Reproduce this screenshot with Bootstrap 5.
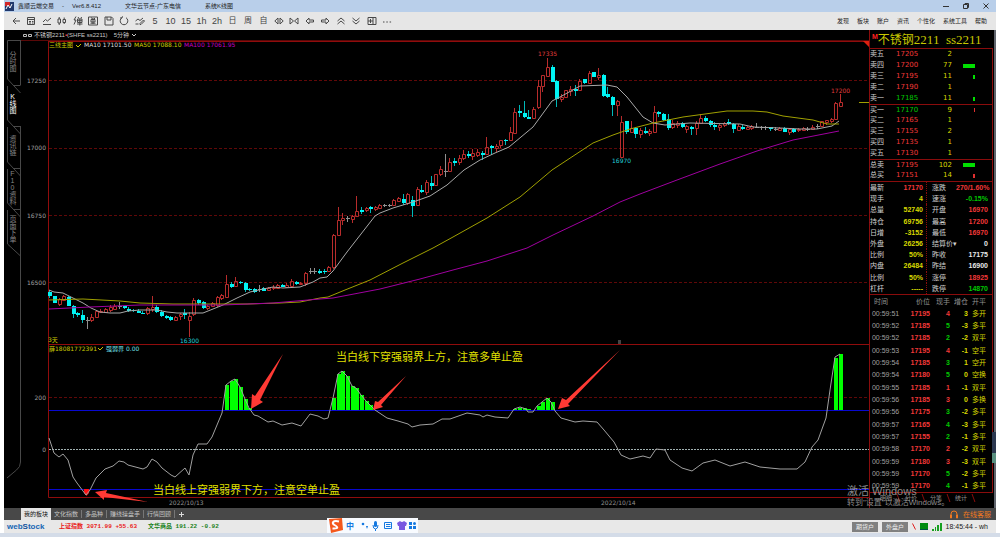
<!DOCTYPE html>
<html lang="zh-CN">
<head>
<meta charset="utf-8">
<meta name="viewport" content="width=device-width, initial-scale=1">
<title>鑫顺云端交易</title>
<link rel="stylesheet" href="https://cdn.jsdelivr.net/npm/bootstrap@5.3.0/dist/css/bootstrap.min.css">
<style>
:root{--line:#8a0c0c;--up:#f03838;--down:#00c800;--gold:#c8c800}
body{background:#fff;font-family:"Liberation Sans","Noto Sans CJK SC",sans-serif;font-size:7px;line-height:1;min-height:100vh;padding:0 4px;overflow-x:hidden}
button{background:none;border:0;padding:0;color:inherit;line-height:1}
svg{display:block}
.title-bar{height:12px;background:#b9cfea;color:#222;font-size:6px;padding-left:1px}
.win-btns button{width:20px;height:12px;display:grid;place-items:center}
.tool-bar{height:18px;background:#e6e6e6;color:#444;padding-left:4px}
.tools{display:grid;grid-template-columns:repeat(25,1fr);width:387px}
.tools button{display:grid;place-items:center;font-size:9px;height:18px}
.tools .cjk{font-size:8px}
.tools svg{width:10px;height:10px;fill:none;stroke:#484848;stroke-width:1}
.menus a{color:#222;text-decoration:none;font-size:6px}
.menus{gap:8px;padding-right:9px}
.desk{background:#000;color:#c0c0c0}
.rail{width:17px;padding-top:10px}
.rail button{writing-mode:vertical-rl;text-orientation:upright;height:42px;width:17px;display:flex;align-items:center;justify-content:center;color:#858585;font-size:7px;position:relative}
.rail button.on{color:#fff}
.rail svg{position:absolute;left:0;top:0}
.code-row{height:11px;font-size:6px;padding-left:2px;gap:2px;border-bottom:1px solid #5a0808;color:#c8c8c8}
.quote-panel{width:127px;border-left:1px solid var(--line);border-right:2px solid #60646c;flex:none;padding-right:1px}
.name-row{height:18px;color:var(--gold);font-family:"Liberation Serif","Noto Sans CJK SC",serif;font-size:12px;white-space:pre;padding-left:2px}
.name-row .latin{font-size:13px}
.name-row sup{color:#ff2020;font:bold 7px "Liberation Sans",sans-serif;top:-3px}
.quote-panel table{width:100%;border-collapse:separate;border-spacing:0;table-layout:fixed;line-height:1;white-space:nowrap}
.quote-panel td,.quote-panel th{padding:0;font-weight:400;vertical-align:middle;overflow:visible}
.quote-panel th{color:#d0d0d0}
.book{border-top:1px solid var(--line);border-right:1px solid var(--line);font-family:"DejaVu Sans","Noto Sans CJK SC",sans-serif}
.book tr{height:11px}
.book .sep td,.book .sep th{border-top:1px solid var(--line)}
.vol-bar{height:4px;display:block;margin-left:auto;margin-right:17px}
.stats{height:114px;border:1px solid var(--line);border-left:0}
.stats .num,.ticks .num{font-weight:700;text-align:right}
.stats .mid{border-right:1px dotted var(--line)}
.ticks{border-right:1px solid var(--line);border-bottom:1px solid var(--line)}
.ticks thead tr{height:12px}
.ticks thead th{color:#909090}
.r{color:var(--up)}.g{color:var(--down)}.y{color:#d8d800}.w{color:#e8e8e8}
.page-tabs{font-size:6px;height:10px;padding-left:4px;color:#909090}
.page-tabs button{padding:1px 6px;white-space:nowrap;border-right:1px solid var(--line);transform:skewX(20deg)}
.page-tabs span{display:block;transform:skewX(-20deg)}
.water{position:absolute;right:50px;bottom:1px;width:99px;color:#b8b8b8;opacity:.75;font-size:11px;white-space:nowrap;pointer-events:none}
.water small{font-size:8px;display:block;margin-top:2px}
.side-knob{position:absolute;right:0;top:402px;width:4px;height:31px;background:#2c3850;border-bottom:10px solid #5a9080}
.board-bar{height:12px;background:#484848;color:#c4c4c4;font-size:6px;padding:0 5px 0 17px}
.board-bar .boards button{padding:0 3px;border-right:1px solid #777;height:8px}
.board-bar .boards button.on{background:#e4e4e4;color:#111;height:12px;border:0}
.service{color:#f07820;font-size:7px;text-decoration:none}
.status-bar{height:13px;background:#e8e8e8;color:#222;padding-left:3px;position:relative;font-family:"Liberation Mono","Noto Sans CJK SC",monospace;font-size:6px;font-weight:700}
.brand-mark{font:bold 8px "Liberation Sans",sans-serif;color:#1766b4;width:52px}
.fund{margin-left:11px}
.acct{background:#808080;color:#eee;width:26px;height:10px;font-size:6px}
.ime{position:absolute;left:323px;top:-2px;height:15px;width:91px;background:#f8fbff}
.edge{height:4px;background:#d4dce8;margin:0 -4px}
text{font-family:"DejaVu Sans","Noto Sans CJK SC",sans-serif;font-size:6px}
.note{font-size:11px;fill:#e0e000}
.ax{fill:#a0a0a0;text-anchor:end}
</style>
</head>
<body>
<header class="title-bar d-flex align-items-center">
  <svg width="9" height="9" viewBox="0 0 9 9"><rect width="9" height="9" fill="#20386c"/><path d="M0 0h5v4H0z" fill="#d02828"/><path d="M1 7l2-4 2 3 2-4" stroke="#fff" fill="none"/></svg>
  <span class="d-flex gap-2 ps-1"><span>鑫顺云端交易</span><span>-</span><span>Ver6.8.412</span></span>
  <span class="ms-4">文华云节点-广东电信</span><span class="ms-4">系统K线图</span>
  <div class="win-btns d-flex ms-auto">
    <button aria-label="最小化"><svg width="6" height="6"><path d="M0 3.500h6" stroke="#333"/></svg></button>
    <button aria-label="还原"><svg width="6" height="6" fill="none" stroke="#333"><path d="M.5 1.500h4v4h-4zM2 1.500v-1h3.500v4h-1"/></svg></button>
    <button aria-label="关闭"><svg width="6" height="6"><path d="M.5.5l5 5m0-5l-5 5" stroke="#333"/></svg></button>
  </div>
</header>

<nav class="tool-bar d-flex align-items-center justify-content-between">
  <div class="tools">
    <button aria-label="返回"><svg viewBox="0 0 10 10"><path d="M9 5H2M5 2L2 5l3 3"/></svg></button>
    <button aria-label="报价"><svg viewBox="0 0 10 10"><path d="M1.500 1.500h7v7h-7zM1.500 3.500h7M3 5.500h2M6 5.500h1.500M3 7h2M6 7h1.500"/></svg></button>
    <button aria-label="分时"><svg viewBox="0 0 10 10"><path d="M1 6l2.500-2.500 2 1.500L9 2M1 8.500h8"/></svg></button>
    <button aria-label="K线"><svg viewBox="0 0 10 10"><path d="M1 3h2.500v4H1zM2.200 1v2M2.200 7v2M6 3.500h2.500v3H6zM7.200 1.500v2M7.200 6.500V8"/></svg></button>
    <button aria-label="闪电下单"><svg viewBox="0 0 10 10"><path d="M3 .5L1 4h2L1 8.500M4.500 3h4.500v3.500H4.500zM4.500 4.700H9M6.800 3v6.500M4 8h5.500M5 1l1 1.500M8.500 1L8 2.500"/></svg></button>
    <button aria-label="云单"><svg viewBox="0 0 10 10"><path d="M.5 1h9v8h-9zM3 3.500h4v2.500H3zM5 2v6M2.500 7.200h5M3.500 1.500l1 2M7 2L6 3"/></svg></button>
    <button aria-label="保存"><svg viewBox="0 0 10 10"><path d="M1 1h6.500L9 2.500V9H1zM3 1v3h4V1"/></svg></button>
    <button aria-label="刷新"><svg viewBox="0 0 10 10"><path d="M3 1.700a3.800 3.800 0 1 0 4 0M3.500.3L3 2l-2 0"/></svg></button>
    <button aria-label="画线"><svg viewBox="0 0 10 10"><path d="M.5 5L3 3l2 1.500L8 2M.5 8h3M5 7.500L8.500 4l1 1L6 8.500H5z"/></svg></button>
    <button>5</button><button>10</button><button>15</button><button>1h</button><button>2h</button>
    <button class="cjk">日</button><button class="cjk">周</button><button class="cjk">自</button>
    <button aria-label="缩小"><svg viewBox="0 0 10 10"><path d="M4 2L.8 5 4 8zM6 2l3.200 3L6 8z"/></svg></button>
    <button aria-label="放大"><svg viewBox="0 0 10 10"><path d="M1 2l3.500 3L1 8zM9 2L5.500 5 9 8z"/></svg></button>
    <button aria-label="左移"><svg viewBox="0 0 10 10"><path d="M1 5l3-3v2h4.500v2H4v2z"/></svg></button>
    <button aria-label="右移"><svg viewBox="0 0 10 10"><path d="M9 5L6 2v2H1.500v2H6v2z"/></svg></button>
    <button aria-label="上页"><svg viewBox="0 0 10 10"><path d="M1.500 5L5 2l3.500 3M1.500 8L5 5l3.500 3"/></svg></button>
    <button aria-label="下页"><svg viewBox="0 0 10 10"><path d="M1.500 2L5 5l3.500-3M1.500 5L5 8l3.500-3"/></svg></button>
    <button aria-label="布局"><svg viewBox="0 0 10 10"><path d="M1 1.500h8v7H1zM6 1.500v7M1 5h5M3.500 3v4"/></svg></button>
    <button aria-label="更多"><svg viewBox="0 0 10 10"><path d="M1 6h1.500M4.300 6h1.500M7.600 6h1.500"/></svg></button>
  </div>
  <div class="menus d-flex">
    <a href="#">发现</a><a href="#">板块</a><a href="#">账户</a><a href="#">资讯</a><a href="#">个性化</a><a href="#">系统工具</a><a href="#">帮助</a>
  </div>
</nav>

<main class="desk d-flex position-relative">
  <aside class="rail flex-shrink-0 position-relative">
    <svg width="17" height="460" fill="none" stroke="#484848"><path d="M16.500 10.500h-13V49l13 14M9 55.500h7.500M3.500 56v34l13 14M9 96.500h7.500M3.500 97v35l13 14M9 138.500h7.500M3.500 139v34l13 14M9 179.500h7.500M3.500 180v34l13 12M16.500 10v45M16.500 96v336q0 5-4 8L3 448"/></svg>
    <button>分时图</button><button class="on">K线图</button><button>资讯链</button><button>F10资料</button><button>页面下单</button>
  </aside>

  <section class="flex-grow-1" style="min-width:0">
    <div class="code-row d-flex align-items-center">
      <svg width="9" height="5" fill="none" stroke="#bbb"><path d="M.5 1.500h3v2h-3zM5.500 1.500h3v2h-3z"/></svg>
      <span>不锈钢2211<span class="r">▪</span>(SHFE ss2211)</span><span class="ms-1">5分钟</span>
      <svg width="6" height="5" fill="none" stroke="#ccc"><path d="M1 1l2 2 2-2"/></svg>
    </div>
    <svg id="chart" viewBox="21 41 848 467" width="100%">
      <g fill="none">
        <path d="M48.500 41v456.500H869M48 344.500h821M48.500 41.500H869" stroke="#900c0c"/>
        <path d="M49 80.500h820M49 148.500h820M49 215.500h820M49 282.500h820M49 397.500h820" stroke="#600808" stroke-dasharray="3 2"/>
      </g>
      <path d="M863 41h6v6z" fill="#e02010"/>
      <path d="M859 102.500h10" stroke="#a0a000"/>
      <path d="M49 449.500h820" stroke="#a0b0b0" stroke-dasharray="2 1"/>
      <path d="M618 340h3v4h-3z" fill="#444"/>
      <g id="bars" fill="#00ff00"></g>
      <g stroke="#0808d0"><path d="M49 410.500h820M49 489.500h820"/></g>
      <path d="M84 489h5v4l-2.500 3-2.500-3z" fill="#ff1010"/>
      <g id="candles"></g>
      <g id="lines" fill="none"></g>
      <g fill="#ff3a34">
        <path d="M283 354l-28 42-3-2-1 15 12-7-3-2z"/>
        <path d="M406 376l-28 26-3-1-2 9 10-3-2-2z"/>
        <path d="M620 350l-54 50-4-2-4 11 12-3-2-2z"/>
        <path d="M95 492l12-2-1 3 42 9-44-5v3z"/>
      </g>
      <text class="ax" x="46" y="83">17250</text><text class="ax" x="46" y="150">17000</text><text class="ax" x="46" y="218">16750</text><text class="ax" x="46" y="285">16500</text><text class="ax" x="46" y="400">200</text><text class="ax" x="46" y="452">0</text>
      <text x="49" y="47" fill="#c8c800">三线主图</text>
      <text x="84" y="47" fill="#ddd">MA10 17101.50</text><text x="134" y="47" fill="#d0d000">MA50 17088.10</text><text x="184" y="47" fill="#c000c0">MA100 17061.95</text>
      <path d="M76 45l2 2 3-3M98 348l2 2 3-3" fill="none" stroke="#c8c800"/>
      <text x="48" y="342" fill="#c8c800">3天</text>
      <text x="49" y="351" fill="#c8c800">薛18081772391</text><text x="106" y="351" fill="#70e0e8">强弱界 0.00</text>
      <text x="538" y="56" fill="#e03c3c">17335</text><text x="831" y="93" fill="#e03c3c">17200</text>
      <text x="612" y="163" fill="#20d0d8">16970</text><text x="180" y="343" fill="#20d0d8">16300</text>
      <text class="note" x="336" y="361">当白线下穿强弱界上方，注意多单止盈</text>
      <text class="note" x="153" y="494">当白线上穿强弱界下方，注意空单止盈</text>
      <text x="169" y="505" fill="#909090">2022/10/13</text><text x="601" y="505" fill="#909090">2022/10/14</text>
    </svg>
  </section>

  <aside class="quote-panel">
    <div class="name-row d-flex align-items-center"><sup>M</sup><span>不锈钢<span class="latin">2211  ss2211</span></span></div>
    <table class="book"><colgroup><col style="width:26px"><col style="width:26px"><col style="width:30px"><col></colgroup><tbody id="book"></tbody></table>
    <table class="stats"><colgroup><col style="width:22px"><col style="width:31px"><col style="width:4px"><col style="width:5px"><col style="width:24px"><col></colgroup><tbody id="stats"></tbody></table>
    <table class="ticks"><colgroup><col style="width:32px"><col style="width:28px"><col style="width:20px"><col style="width:18px"><col></colgroup>
      <thead><tr><th class="ps-1">时间</th><th class="text-end">价位</th><th class="text-end">现手</th><th class="text-end">增仓</th><th class="ps-1">开平</th></tr></thead><tbody id="ticks"></tbody></table>
    <div class="page-tabs d-flex align-items-center"><button><span>明细</span></button><button><span>分价</span></button><button><span>分笔</span></button><button><span>统计</span></button></div>
  </aside>
  <div class="water">激活 Windows<small>转到"设置"以激活Windows。</small></div>
  <div class="side-knob"></div>
</main>

<div class="board-bar d-flex align-items-center justify-content-between">
  <div class="boards d-flex align-items-center"><button class="on">我的板块</button><button>文化指数</button><button>多品种</button><button>赚线操盘手</button><button>行情回顾</button>
  <button class="border-0" aria-label="添加"><svg width="6" height="6" stroke="#ddd"><path d="M3.500 1v5M1 3.500h5"/></svg></button></div>
  <a class="service d-flex align-items-center gap-1" href="#"><svg width="10" height="9" fill="none" stroke="#f07820"><path d="M2 5V4a3 3 0 0 1 6 0v1M1.500 5h1v3h-1zM7.500 5h1v3h-1z"/></svg>在线客服</a>
</div>

<footer class="status-bar d-flex align-items-center">
  <span class="brand-mark">web<span style="color:#10509c">S</span>tock</span>
  <span class="text-nowrap" style="color:#e81818">上证指数 3071.99 +55.63</span>
  <span class="fund text-nowrap" style="color:#188018">文华商品 191.22 -0.92</span>
  <div class="d-flex align-items-center ms-auto gap-1 pe-2" style="font-family:'Liberation Sans';font-weight:400;font-size:7px">
    <button class="acct">期货户</button><button class="acct">外盘户</button>
    <svg width="4" height="7"><path d="M.5.5l3 6" stroke="#e02020"/></svg>
    <svg width="8" height="8"><path d="M0 0h8v6H0z" fill="#008c10"/><path d="M0 6.500h8" stroke="#054"/></svg>
    <svg width="10" height="8" fill="#18a020"><path d="M0 6h2v2H0zM3 4h1v4H3zM5 2h2v6H5zM8 0h2v8H8z"/></svg>
    <span class="text-nowrap">18:45:44 - wh</span>
  </div>
  <div class="ime">
    <svg width="91" height="15" viewBox="0 0 91 15">
      <path d="M2 1l13-1 1 12-12 3z" fill="#f4581c"/><path d="M12 3.500C6 2 4 5 7.500 7S12 11 5.500 10.500" fill="none" stroke="#fff" stroke-width="2"/>
      <g fill="#1478e0"><circle cx="36" cy="6" r="1.300"/><path d="M39 8h2l-1 3z"/><rect x="47" y="3" width="3" height="6" rx="1.500"/><path d="M70 5l3-2q2 2 4 0l3 2-1 3h-1v4h-6V8h-1z" fill="#7858e0"/><path d="M82 4h3v3h-3zM82 8h3v3h-3zM86 8h3v3h-3z"/><circle cx="87.500" cy="5.500" r="1.500"/></g>
      <g fill="none" stroke="#1478e0"><path d="M46 7q0 4 2.500 4T51 7M48.500 11v2M57.500 4.500h7v6h-7zM59 6.500h4.500M59 8.500h4.500"/></g>
      <text x="19" y="11" fill="#1478e0" style="font-size:8px;font-weight:700">中</text>
    </svg>
  </div>
</footer>
<div class="edge"></div>

<script>
// candle rows: kind (r rising, c falling, w doji), high, top, bottom, low
const K = `c290,292,296,298|c296,296,303,303|r298,299,304,306|r295,296,300,301|c296,297,306,306|c305,306,314,318|c312,313,315,317|c310,315,320,323|w317,320,320,329|r314,317,320,322|r310,311,317,317|r309,311,312,313|r308,309,312,313|r305,307,310,312|r304,306,309,310|w302,306,306,309|c306,306,308,309|c307,309,311,312|c309,310,311,312|c309,311,313,313|c311,313,314,314|r307,308,313,315|r296,307,309,312|c305,307,312,313|c310,312,316,317|c315,316,318,319|c316,317,320,321|r316,317,320,321|r313,314,316,320|c309,313,315,319|r312,316,320,337|r298,300,314,316|c299,300,303,305|c301,302,308,309|r305,306,308,310|r302,303,306,307|r296,297,305,307|r294,295,298,300|r275,284,297,297|c282,284,287,288|r277,281,286,286|c281,282,283,284|c282,283,290,292|c288,289,290,291|c288,289,292,293|w285,289,289,292|c287,288,291,291|r287,288,290,291|r285,287,288,290|r284,285,288,289|c284,285,287,287|r283,285,287,288|r279,281,286,286|c281,282,284,285|r282,283,284,285|r272,273,283,286|w268,271,271,274|w268,271,271,274|c269,271,273,274|c269,271,272,274|r266,267,271,272|r234,235,267,269|r207,220,235,235|r213,218,220,225|w216,218,218,222|r215,216,219,223|r196,211,216,216|c207,210,212,214|r207,208,210,212|c206,207,209,213|r206,207,209,211|r204,205,208,209|w204,205,205,207|w204,205,205,207|r199,200,205,206|r197,198,201,202|c194,199,203,205|r193,194,203,205|c196,200,206,217|r187,189,205,206|c185,190,192,193|r180,182,192,195|c176,183,186,190|r174,174,185,186|r166,169,174,176|w154,171,171,177|r158,162,171,172|c158,161,163,166|r155,158,162,165|r150,154,158,160|c151,154,156,158|r149,153,156,160|r149,152,155,157|c151,153,155,160|r137,147,154,155|c145,146,148,155|r144,146,148,152|r140,140,145,148|c139,140,141,145|r127,132,140,141|r108,112,133,133|c105,111,113,117|c101,113,117,118|c110,117,119,119|r107,109,118,119|r80,86,107,109|r75,75,86,92|r58,67,76,77|c65,67,82,82|c80,81,99,107|r94,97,99,102|r90,90,97,97|r86,89,91,96|c85,89,91,96|r79,81,90,90|c79,79,83,84|r71,73,83,83|c72,72,77,77|r68,75,77,80|c74,75,96,97|c87,94,97,98|c96,97,105,116|r100,101,105,116|r116,122,157,157|c121,121,132,134|r121,128,132,133|c127,128,134,138|r128,130,134,138|c127,131,133,134|r129,131,133,136|r106,112,132,132|c111,112,114,117|c113,114,120,121|c114,119,128,130|r120,123,127,129|r121,123,125,128|c122,123,127,128|r125,126,129,133|c126,127,129,135|r121,123,128,135|r114,118,123,124|c116,118,121,122|c120,121,125,127|c122,125,127,130|r124,125,127,131|r122,123,125,127|c119,122,124,125|c123,124,129,133|r124,126,130,131|c125,127,129,130|r126,127,129,130|r125,126,128,130|w123,127,127,128|w126,127,127,130|w126,127,127,130|c127,127,129,131|w127,129,129,131|r127,128,130,131|c127,128,132,132|r128,129,132,135|c128,129,132,133|r128,129,130,132|r127,128,130,131|w127,129,129,131|r125,127,129,129|w124,126,126,129|r121,121,126,126|r120,120,122,125|r118,119,121,123|r102,103,119,120|r94,102,106,107`.split('|');
const X = i => Math.round(49.3 + 4.65 * i);
let s = '';
K.forEach((d, i) => {
  const [h, t, b, l] = d.slice(1).split(',').map(Number), x = X(i);
  if (d[0] === 'c') s += `<path d="M${x + .5} ${h}V${l}" stroke="#00b8b8"/><rect x="${x - 1}" y="${t}" width="4" height="${Math.max(b - t, 1)}" fill="#00f4f4"/>`;
  else if (d[0] === 'w') s += `<path d="M${x + .5} ${h}V${l}M${x - 1} ${t + .5}h4" stroke="#909090"/>`;
  else s += `<path d="M${x + .5} ${h}V${t}M${x + .5} ${b}V${l}M${x - 1 + .5} ${t + .5}h3V${Math.max(b, t + 1) + .5}h-3z" stroke="#b82c2c" fill="none"/>`;
});
document.getElementById('candles').innerHTML = s;

const bars = {38:385,39:381,40:379,41:387,42:399,43:408,61:398,62:374,63:371,64:376,65:386,66:388,67:395,68:401,69:405,100:409,101:408,102:408,103:409,105:406,106:402,107:398,108:402,169:358,170:354};
document.getElementById('bars').innerHTML = Object.entries(bars).map(([i, y]) => `<rect x="${X(i) - 1}" y="${y}" width="4" height="${411 - y}"/>`).join('');

const L = [
 ['#a8a8a8','49,290 54,292 63,293 73,298 83,303 91,308 100,312 110,313 120,313 128,311 140,310 157,310 167,312 177,313 203,313 213,309 223,305 237,298 250,292 263,289 273,287 283,288 300,287 313,282 320,278 327,277 333,271 347,252 375,216 380,213 393,208 413,202 430,196 447,185 464,170 480,160 495,153 509,147 515,142 533,127 552,101 560,97 580,86 607,85 617,87 627,97 643,117 653,123 665,125 690,123 740,124 753,127 780,128 800,129 817,129 832,126 839,121'],
 ['#a0a000','49,300 83,299 120,301 140,303 173,304 247,304 280,303 300,302 320,298 328,297 345,290 370,280 403,263 433,248 453,237 487,218 520,197 552,170 593,143 613,135 630,129 653,123 683,117 727,111 753,111 767,112 783,116 813,120 827,124 839,124'],
 ['#a000a0','49,309 90,307 140,305 223,305 273,303 320,299 333,298 380,289 420,279 453,270 487,261 527,248 553,235 593,216 620,202 640,194 677,180 720,164 757,151 793,140 839,131'],
 ['#a0a0a0','49,438 54,453 59,457 63,454 68,460 73,477 77,483 86,495 90,490 96,478 105,469 113,466 119,461 124,462 128,465 143,469 147,467 152,459 157,462 162,468 171,475 175,477 185,468 189,475 193,455 198,444 207,444 212,437 222,413 226,385 231,381 235,379 240,387 245,399 249,408 254,415 258,416 268,422 273,421 282,425 292,423 301,426 310,414 318,416 324,419 328,418 333,398 338,374 342,371 347,376 352,386 356,388 361,395 366,401 370,405 375,410 387,418 398,421 408,424 412,427 420,425 433,424 442,419 450,419 467,413 480,415 483,417 487,415 495,417 508,418 514,409 520,407 526,409 528,412 533,412 537,406 547,398 551,402 555,411 561,418 575,422 583,421 597,422 604,430 614,442 621,455 630,459 643,456 650,458 656,449 665,450 670,460 682,468 692,471 703,463 715,460 730,466 745,462 760,467 780,469 797,469 805,462 812,447 818,440 826,418 830,390 835,357 840,354']];
document.getElementById('lines').innerHTML = L.map(([c, p]) => `<polyline points="${p}" stroke="${c}"/>`).join('');

// order book: label, price, volume, bar width, price colour, bar colour
const B = [['卖五',17205,2,0],['卖四',17200,77,12,'r','g'],['卖三',17195,11,2,'r','g'],['卖二',17190,1,0],['卖一',17185,11,2,'g','g'],['买一',17170,9,1,'g','r'],['买二',17165,1,0],['买三',17155,2,0],['买四',17135,1,0],['买五',17130,1,0],['总卖',17195,102,12,'r','g'],['总买',17151,14,2,'r','r']];
document.getElementById('book').innerHTML = B.map(([n, p, v, w, c, k], i) => `<tr class="${i == 5 || i == 10 ? 'sep' : ''}"><th>${n}</th><td class="${c || 'r'}">${p}</td><td class="y text-end">${v}</td><td>${w ? `<span class="vol-bar" style="width:${w}px;background:${k == 'g' ? '#00e000' : '#e03030'}"></span>` : ''}</td></tr>`).join('');

const S = [['最新','17170','r','涨跌','270/1.60%','r'],['现手','4','y','速涨','-0.15%','g'],['总量','52740','y','开盘','16970','r'],['持仓','69756','y','最高','17200','r'],['日增','-3152','y','最低','16970','r'],['外盘','26256','y','结算价▾','0','w'],['比例','50%','y','昨收','17175','w'],['内盘','26484','y','昨结','16900','w'],['比例','50%','y','涨停','18925','r'],['杠杆','-----','y','跌停','14870','g']];
document.getElementById('stats').innerHTML = S.map(r => `<tr><th>${r[0]}</th><td class="num ${r[2]}">${r[1]}</td><td class="mid"></td><td></td><th>${r[3]}</th><td class="num pe-1 ${r[5]}">${r[4]}</td></tr>`).join('');

const T = '51 17195 r4 3 多开|52 17185 g5 -3 多平|52 17185 g2 -2 双平|53 17195 r4 -1 空平|54 17185 g3 1 空开|54 17180 g5 0 空换|55 17185 r1 -1 双平|56 17185 r3 0 多换|56 17175 g3 -2 多平|57 17165 g4 -3 多平|57 17155 g2 -1 多平|58 17170 r2 -2 双平|59 17180 r3 -3 双平|59 17170 g5 -2 多平|59 17170 g4 -1 多平';
document.getElementById('ticks').innerHTML = T.split('|').map((t, i) => { const [a, p, v, z, k] = t.split(' '); return `<tr style="height:${i % 3 == 2 ? 13 : 12}px"><td style="color:#a0a0a0">&nbsp;00:59:${a}</td><td class="num r">${p}</td><td class="num ${v[0]}">${v.slice(1)}</td><td class="num y">${z}</td><td class="y ps-1">${k}</td></tr>`; }).join('');
</script>
<script src="https://cdn.jsdelivr.net/npm/bootstrap@5.3.0/dist/js/bootstrap.bundle.min.js"></script>
</body>
</html>
